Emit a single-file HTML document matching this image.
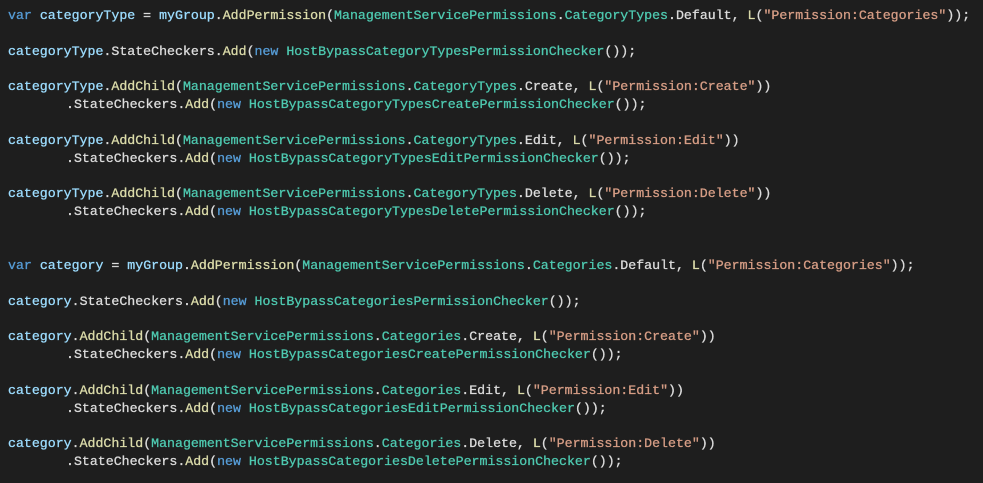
<!DOCTYPE html>
<html><head><meta charset="utf-8"><style>
html,body{margin:0;padding:0;background:#1e1e1e;width:983px;height:483px;overflow:hidden}
pre{margin:0;padding:7px 0 0 8px;font-family:"Liberation Mono",monospace;font-size:13.25px;line-height:17.85px;color:#dcdcdc;-webkit-text-stroke:0.3px;white-space:pre}
.k{color:#569cd6}.v{color:#9cdcfe}.m{color:#dcdcaa}.t{color:#4ec9b0}.s{color:#d69d85}.b{color:#dcdcdc}.p{color:#dcdcdc}.w{color:#dcdcdc}
.i{display:inline-block;width:58px}
</style></head><body><pre><span class="k">var</span> <span class="v">categoryType</span> = <span class="v">myGroup</span>.<span class="m">AddPermission</span><span class="b">(</span><span class="t">ManagementServicePermissions</span>.<span class="t">CategoryTypes</span>.Default, <span class="m">L</span><span class="p">(</span><span class="s">"Permission:Categories"</span><span class="p">)</span><span class="b">)</span>;

<span class="v">categoryType</span>.StateCheckers.<span class="m">Add</span><span class="b">(</span><span class="k">new</span> <span class="t">HostBypassCategoryTypesPermissionChecker</span><span class="p">()</span><span class="b">)</span>;

<span class="v">categoryType</span>.<span class="m">AddChild</span><span class="b">(</span><span class="t">ManagementServicePermissions</span>.<span class="t">CategoryTypes</span>.Create, <span class="m">L</span><span class="p">(</span><span class="s">"Permission:Create"</span><span class="p">)</span><span class="b">)</span>
<span class="i"></span>.StateCheckers.<span class="m">Add</span><span class="b">(</span><span class="k">new</span> <span class="t">HostBypassCategoryTypesCreatePermissionChecker</span><span class="p">()</span><span class="b">)</span>;

<span class="v">categoryType</span>.<span class="m">AddChild</span><span class="b">(</span><span class="t">ManagementServicePermissions</span>.<span class="t">CategoryTypes</span>.Edit, <span class="m">L</span><span class="p">(</span><span class="s">"Permission:Edit"</span><span class="p">)</span><span class="b">)</span>
<span class="i"></span>.StateCheckers.<span class="m">Add</span><span class="b">(</span><span class="k">new</span> <span class="t">HostBypassCategoryTypesEditPermissionChecker</span><span class="p">()</span><span class="b">)</span>;

<span class="v">categoryType</span>.<span class="m">AddChild</span><span class="b">(</span><span class="t">ManagementServicePermissions</span>.<span class="t">CategoryTypes</span>.Delete, <span class="m">L</span><span class="p">(</span><span class="s">"Permission:Delete"</span><span class="p">)</span><span class="b">)</span>
<span class="i"></span>.StateCheckers.<span class="m">Add</span><span class="b">(</span><span class="k">new</span> <span class="t">HostBypassCategoryTypesDeletePermissionChecker</span><span class="p">()</span><span class="b">)</span>;


<span class="k">var</span> <span class="v">category</span> = <span class="v">myGroup</span>.<span class="m">AddPermission</span><span class="b">(</span><span class="t">ManagementServicePermissions</span>.<span class="t">Categories</span>.Default, <span class="m">L</span><span class="p">(</span><span class="s">"Permission:Categories"</span><span class="p">)</span><span class="b">)</span>;

<span class="v">category</span>.StateCheckers.<span class="m">Add</span><span class="b">(</span><span class="k">new</span> <span class="t">HostBypassCategoriesPermissionChecker</span><span class="p">()</span><span class="b">)</span>;

<span class="v">category</span>.<span class="m">AddChild</span><span class="b">(</span><span class="t">ManagementServicePermissions</span>.<span class="t">Categories</span>.Create, <span class="m">L</span><span class="p">(</span><span class="s">"Permission:Create"</span><span class="p">)</span><span class="b">)</span>
<span class="i"></span>.StateCheckers.<span class="m">Add</span><span class="b">(</span><span class="k">new</span> <span class="t">HostBypassCategoriesCreatePermissionChecker</span><span class="p">()</span><span class="b">)</span>;

<span class="v">category</span>.<span class="m">AddChild</span><span class="b">(</span><span class="t">ManagementServicePermissions</span>.<span class="t">Categories</span>.Edit, <span class="m">L</span><span class="p">(</span><span class="s">"Permission:Edit"</span><span class="p">)</span><span class="b">)</span>
<span class="i"></span>.StateCheckers.<span class="m">Add</span><span class="b">(</span><span class="k">new</span> <span class="t">HostBypassCategoriesEditPermissionChecker</span><span class="p">()</span><span class="b">)</span>;

<span class="v">category</span>.<span class="m">AddChild</span><span class="b">(</span><span class="t">ManagementServicePermissions</span>.<span class="t">Categories</span>.Delete, <span class="m">L</span><span class="p">(</span><span class="s">"Permission:Delete"</span><span class="p">)</span><span class="b">)</span>
<span class="i"></span>.StateCheckers.<span class="m">Add</span><span class="b">(</span><span class="k">new</span> <span class="t">HostBypassCategoriesDeletePermissionChecker</span><span class="p">()</span><span class="b">)</span>;
</pre></body></html>
